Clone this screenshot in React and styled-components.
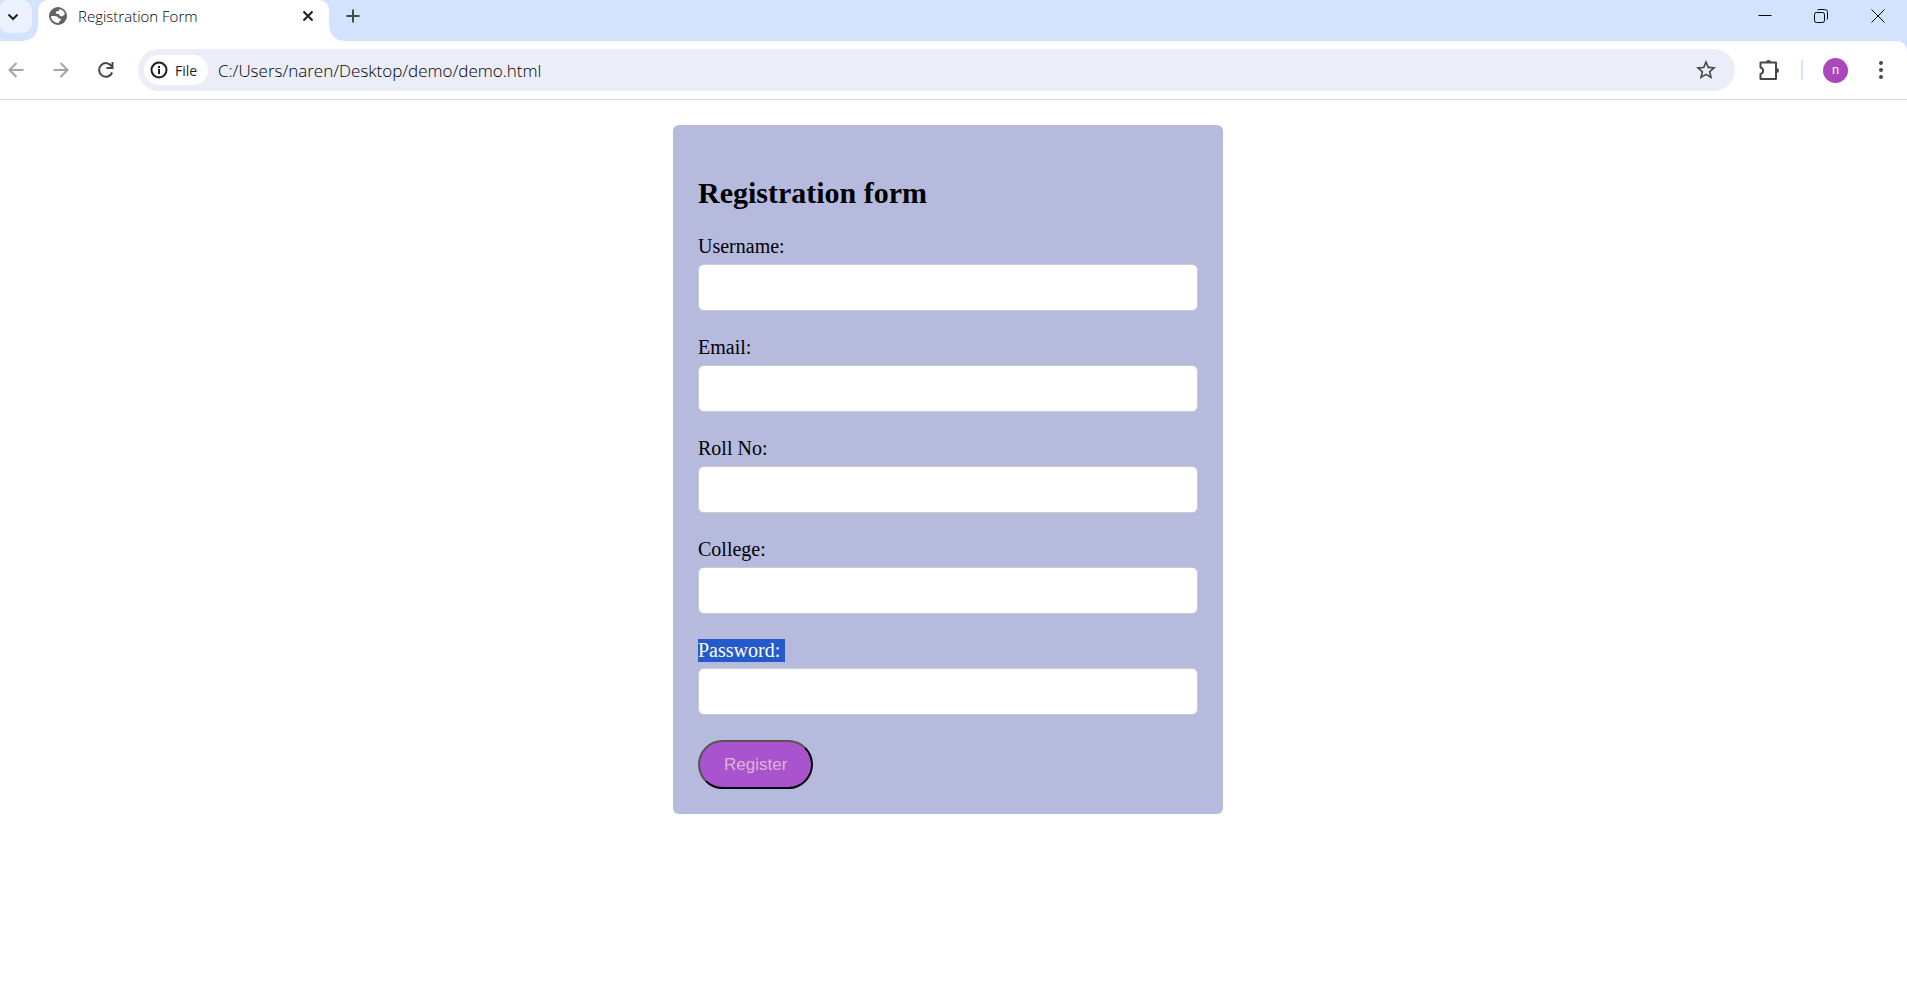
import React from "react";
import styled, { createGlobalStyle } from "styled-components";
import { MdStarBorder } from "react-icons/md";

const GlobalStyle = createGlobalStyle`
  * { box-sizing: border-box; }
  body { margin: 0; background: #fff; color: #000; }
  button, input { font: inherit; }
`;

const uiFont = `"Segoe UI", "Open Sans", "Noto Sans", sans-serif`;

const Browser = styled.div`
  min-height: 100vh;
  display: flex;
  flex-direction: column;
  font-family: ${uiFont};
`;

const TabStrip = styled.header`
  height: 41px;
  display: flex;
  align-items: flex-start;
  background: #d3e3fd;
  overflow: hidden;
`;

const IconButton = styled.button`
  width: ${(p) => p.$width || 32}px;
  height: 32px;
  flex: none;
  display: flex;
  align-items: center;
  justify-content: center;
  padding: 0;
  border: 0;
  background: none;
  color: ${(p) => p.$color || "#474747"};
  svg { display: block; }
`;

const TabSearch = styled(IconButton)`
  height: 33px;
  padding-right: 6px;
  margin-right: 6px;
  border-radius: 8px 10px 10px 8px;
  background: #ecf2fe;
`;

const Tab = styled.div`
  position: relative;
  width: 291px;
  height: 41px;
  display: flex;
  align-items: flex-start;
  padding: 0 10px 0 11px;
  border-radius: 10px 10px 0 0;
  background: #fff;
  &::before, &::after {
    content: "";
    position: absolute;
    bottom: 0;
    width: 14px;
    height: 14px;
  }
  &::before {
    right: 100%;
    background: radial-gradient(circle at 0 0, transparent 13px, #fff 14px);
  }
  &::after {
    left: 100%;
    background: radial-gradient(circle at 100% 0, transparent 13px, #fff 14px);
  }
`;

const Favicon = styled.span`
  height: 32px;
  display: flex;
  align-items: center;
  margin-right: 11px;
`;

const TabTitle = styled.span`
  flex: 1;
  font-size: 15px;
  line-height: 32px;
  font-weight: 300;
  color: #000;
  white-space: nowrap;
`;

const WindowControls = styled.div`
  display: flex;
  margin-left: auto;
`;

const StripBody = styled.div`
  background: #d3e3fd;
`;

const Toolbar = styled.nav`
  height: 59px;
  display: flex;
  align-items: center;
  background: #fff;
  border-bottom: 1px solid #dcdcdc;
  border-radius: 0 10px 0 0;
`;

const NavButtons = styled.div`
  display: flex;
  gap: 13px;
  margin-right: 16px;
`;

const AddressBar = styled.form`
  flex: 1;
  height: 42px;
  display: flex;
  align-items: center;
  padding: 0 13px 0 6px;
  border-radius: 21px;
  background: #ebeef8;
`;

const FileChip = styled.button`
  width: 64px;
  height: 30px;
  display: flex;
  align-items: center;
  gap: 7px;
  padding: 0 6px;
  border: 0;
  border-radius: 15px;
  background: #fff;
  color: #1f1f1f;
  font-size: 14px;
  svg { flex: none; }
`;

const UrlInput = styled.input`
  flex: 1;
  min-width: 0;
  margin-left: 10px;
  padding: 0;
  border: 0;
  outline: 0;
  background: none;
  color: #000;
  font-size: 17px;
  font-weight: 300;
`;

const Actions = styled.div`
  display: flex;
  align-items: center;
  padding: 0 10px 0 18px;
`;

const Divider = styled.span`
  width: 2px;
  height: 20px;
  margin: 0 20px 0 16px;
  background: #d3e3fd;
`;

const Avatar = styled.button`
  width: 25px;
  height: 25px;
  margin-right: 17px;
  padding: 0;
  border: 0;
  border-radius: 50%;
  background: #ab47bc;
  color: #fff;
  font-family: Roboto, sans-serif;
  font-size: 13px;
  line-height: 24px;
`;

const Page = styled.main`
  flex: 1;
  display: flex;
  justify-content: center;
  align-items: flex-start;
  padding: 25px 11px 25px 0;
  font-family: "Times New Roman", "Liberation Serif", serif;
`;

const Card = styled.form`
  width: 550px;
  padding: 25px;
  border-radius: 6px;
  background: #b6bbde;
`;

const Title = styled.h2`
  margin: 25px 0;
  font-size: 30px;
  line-height: 35px;
`;

const Field = styled.div`
  margin-bottom: 25px;
`;

const Label = styled.label`
  display: block;
  width: fit-content;
  margin-bottom: 6px;
  padding-right: 5px;
  font-size: 20px;
  line-height: 23px;
  color: ${(p) => (p.$selected ? "#fff" : "#000")};
  background: ${(p) => (p.$selected ? "#245bcb" : "none")};
`;

const TextInput = styled.input`
  display: block;
  width: 100%;
  height: 47px;
  padding: 12px;
  border: 1px solid #ccc;
  border-radius: 6px;
  background: #fff;
`;

const RegisterButton = styled.button`
  display: block;
  height: 49px;
  padding: 0 24px;
  border: 2px outset #000;
  border-radius: 25px;
  background: #a953cf;
  color: #dcb8cb;
  font-family: Arial, "Liberation Sans", sans-serif;
  font-size: 17px;
`;

const Stroke = ({ size = 20, width = 2, children }) => (
  <svg width={size} height={size} viewBox={`0 0 ${size} ${size}`} fill="none" stroke="currentColor" strokeWidth={width} aria-hidden="true">
    {children}
  </svg>
);

const GlobeIcon = () => (
  <svg width="18" height="18" viewBox="0 0 18 18" aria-hidden="true">
    <circle cx="9" cy="9" r="9" fill="#5f6368" />
    <path d="M10.500 2C13.200 2.500 15.300 4.500 15.900 7L14.500 8.500L12.500 9.500L10.500 8.500L10 7H7.500L6.800 5.500L8 4H9.800Z" fill="#fff" />
    <path d="M2 9H5.500C8 9 9.300 10 9.500 11.500H11.500L12 13L10 14.500V16C5.500 16.300 1.900 13 2 9Z" fill="#fff" />
  </svg>
);

const fields = [
  { id: "username", label: "Username:", type: "text" },
  { id: "email", label: "Email:", type: "email" },
  { id: "rollno", label: "Roll No:", type: "text" },
  { id: "college", label: "College:", type: "text" },
  { id: "password", label: "Password:", type: "password", selected: true },
];

export default function App() {
  const stop = (e) => e.preventDefault();
  return (
    <Browser>
      <GlobalStyle />
      <TabStrip>
        <TabSearch $color="#1f1f1f" aria-label="Search tabs">
          <Stroke size={12}><path d="M1.500 3.500L6 8L10.500 3.500" /></Stroke>
        </TabSearch>
        <Tab>
          <Favicon><GlobeIcon /></Favicon>
          <TabTitle>Registration Form</TabTitle>
          <IconButton $width={22} $color="#1f1f1f" aria-label="Close tab">
            <Stroke size={12}><path d="M1.500 1.500L10.500 10.500M10.500 1.500L1.500 10.500" /></Stroke>
          </IconButton>
        </Tab>
        <IconButton $width={48} aria-label="New tab">
          <Stroke size={14}><path d="M7 .5V13.500M.5 7H13.500" /></Stroke>
        </IconButton>
        <WindowControls>
          <IconButton $width={56} $color="#000" aria-label="Minimize">
            <Stroke size={14} width={1}><path d="M.5 6.500H13.500" /></Stroke>
          </IconButton>
          <IconButton $width={56} $color="#000" aria-label="Restore">
            <Stroke size={14} width={1}>
              <rect x=".5" y="3.500" width="10" height="10" rx="2" />
              <path d="M3.500 1C4 .6 4.500 .5 5 .5H10.500C12.500 .5 13.500 1.500 13.500 3.500V9C13.500 9.700 13.300 10.200 13 10.500" />
            </Stroke>
          </IconButton>
          <IconButton $width={58} $color="#000" aria-label="Close">
            <Stroke size={14} width={1}><path d="M.5 .5L13.500 13.500M13.500 .5L.5 13.500" /></Stroke>
          </IconButton>
        </WindowControls>
      </TabStrip>
      <StripBody>
        <Toolbar>
          <NavButtons>
            <IconButton $color="#a5a5a5" aria-label="Back">
              <Stroke size={16}><path d="M15.500 8H2M8.500 1L1.500 8L8.500 15" /></Stroke>
            </IconButton>
            <IconButton $color="#a5a5a5" aria-label="Forward">
              <Stroke size={16}><path d="M.5 8H14M7.500 1L14.500 8L7.500 15" /></Stroke>
            </IconButton>
            <IconButton aria-label="Reload">
              <Stroke size={18}><path d="M15.200 11.500A6.800 6.800 0 1 1 14.800 5.500M15.500 1V7H9.500" /></Stroke>
            </IconButton>
          </NavButtons>
          <AddressBar onSubmit={stop}>
            <FileChip type="button">
              <Stroke size={18}><circle cx="9" cy="9" r="7.500" /><path d="M9 8V13M9 5V7" /></Stroke>
              File
            </FileChip>
            <UrlInput aria-label="Address" defaultValue="C:/Users/naren/Desktop/demo/demo.html" />
            <IconButton type="button" aria-label="Bookmark">
              <MdStarBorder size={24} />
            </IconButton>
          </AddressBar>
          <Actions>
            <IconButton aria-label="Extensions">
              <svg width="22" height="22" viewBox="0 0 22 22" fill="none" aria-hidden="true">
                <path d="M2.500 3.500H18V20H2.500V15C6 14 6 9.500 2.500 8.500Z" stroke="currentColor" strokeWidth="2" strokeLinejoin="round" />
                <path d="M8 3A2.500 2 0 0 1 13 3ZM19 9A2 2.500 0 0 1 19 14Z" fill="currentColor" />
              </svg>
            </IconButton>
            <Divider />
            <Avatar aria-label="Profile">n</Avatar>
            <IconButton aria-label="Menu">
              <svg width="4" height="18" viewBox="0 0 4 18" fill="currentColor" aria-hidden="true">
                <circle cx="2" cy="2" r="2" /><circle cx="2" cy="9" r="2" /><circle cx="2" cy="16" r="2" />
              </svg>
            </IconButton>
          </Actions>
        </Toolbar>
      </StripBody>
      <Page>
        <Card onSubmit={stop}>
          <Title>Registration form</Title>
          {fields.map((f) => (
            <Field key={f.id}>
              <Label htmlFor={f.id} $selected={f.selected}>{f.label}</Label>
              <TextInput id={f.id} type={f.type} />
            </Field>
          ))}
          <RegisterButton type="submit">Register</RegisterButton>
        </Card>
      </Page>
    </Browser>
  );
}
